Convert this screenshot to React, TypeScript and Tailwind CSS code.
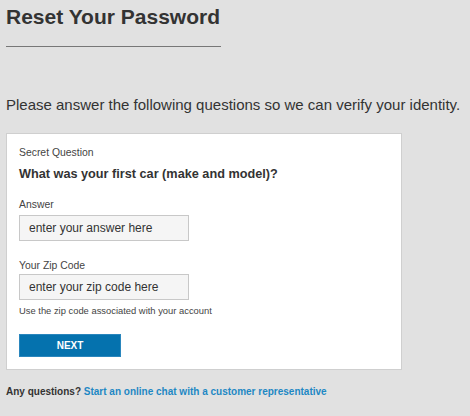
export default function App() {
  const label = "text-[10.4px] leading-[14px] text-[#444]";
  const input =
    "block w-[170px] h-[26px] border border-[#c8c8c8] bg-[#f5f5f5] pl-[9px] text-[12px] text-[#333] placeholder:text-[#333] outline-none";

  return (
    <div className="min-h-[416px] bg-[#e1e1e1] px-[6px] pt-[5px] font-['Liberation_Sans',Arial,sans-serif] text-[#333]">
      <h1 className="text-[21px] leading-[24px] font-bold text-[#333]">Reset Your Password</h1>
      <div className="mt-[17px] h-px w-[215px] bg-[#777]" />

      <p className="mt-[49px] text-[15px] leading-[18px] text-[#333]">
        Please answer the following questions so we can verify your identity.
      </p>

      <div className="mt-[19px] w-[396px] border border-[#cfcfcf] bg-white px-[12px] pt-[12px] pb-[12px]">
        <div className={label}>Secret Question</div>
        <div className="mt-[6px] text-[12.7px] leading-[16px] font-bold text-[#333]">
          What was your first car (make and model)?
        </div>

        <div className={`mt-[16px] ${label}`}>Answer</div>
        <input className={`mt-[3px] ${input}`} placeholder="enter your answer here" />

        <div className={`mt-[18px] ${label}`}>Your Zip Code</div>
        <input className={`mt-[1px] ${input}`} placeholder="enter your zip code here" />
        <div className="mt-[5px] text-[9.4px] leading-[12px] text-[#444]">
          Use the zip code associated with your account
        </div>

        <button className="mt-[17px] block h-[23px] w-[102px] bg-[#0572ae] text-[10px] font-bold text-white border border-[#2a86bd]">
          NEXT
        </button>
      </div>

      <div className="mt-[15px] text-[10px] leading-[14px] font-bold">
        <span className="text-[#333]">Any questions?</span>{" "}
        <a className="text-[#1e88c4]" href="#">
          Start an online chat with a customer representative
        </a>
      </div>
    </div>
  );
}
